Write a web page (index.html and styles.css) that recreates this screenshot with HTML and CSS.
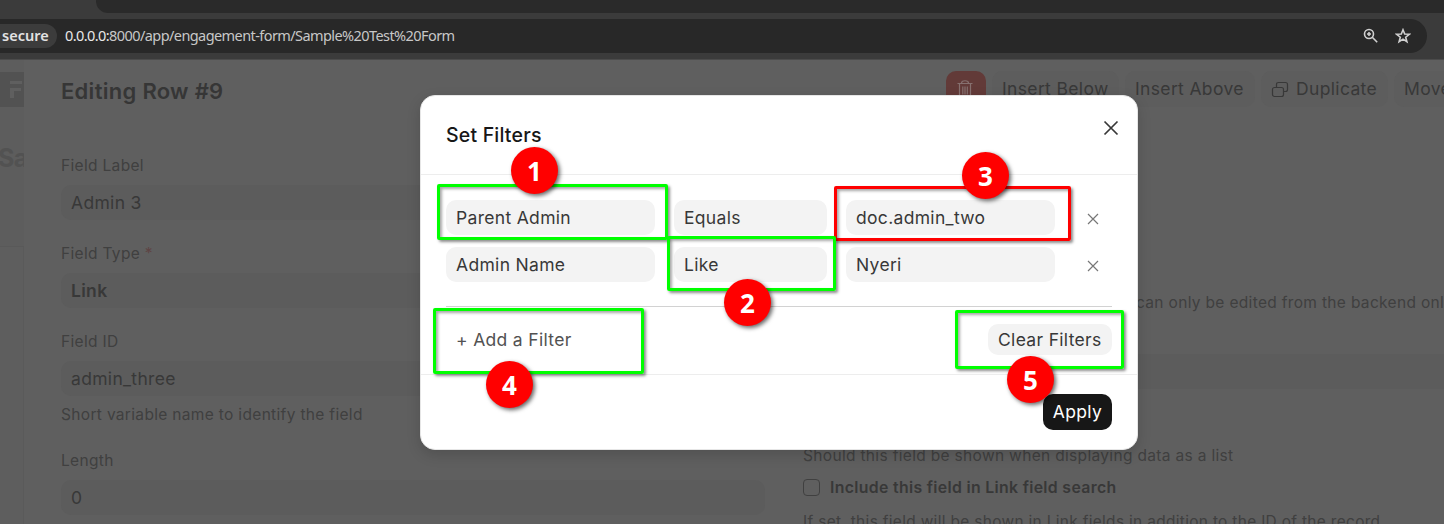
FILE: index.html
```
<!DOCTYPE html>
<html lang="en">
<head>
<meta charset="utf-8">
<title>Set Filters</title>
<link rel="stylesheet" href="styles.css">
</head>
<body>
<header class="browser">
  <div class="tabs"></div>
  <div class="omnibox">
    <span class="chip">secure</span>
    <span class="url"><b>0.0.0.0:</b>8000/app/engagement-form/Sample%20Test%20Form</span>
    <svg class="zoomicon" viewBox="0 0 16 16" width="16" height="16"><circle cx="6" cy="6" r="4.5"/><path d="M9.3 9.3 14.2 14.2M6 4v4M4 6h4"/></svg>
    <svg class="star" viewBox="0 0 16 16" width="16" height="16"><path d="M8 1.8 9.7 6l4.6.3-3.6 2.9 1.2 4.5L8 11.2l-3.9 2.5 1.2-4.5L1.7 6.3 6.3 6z"/></svg>
  </div>
</header>
<main class="page">
  <aside class="strip">
    <svg class="logo" viewBox="0 0 24 35" width="24" height="35"><rect x="-8" width="40" height="35" rx="4" fill="#525252"/><path d="M10 9h12v3H10zM10 16h11v3h-7v7h-4z" fill="#5f5f5f"/></svg>
    <div class="doc">Sa</div>
    <div class="sheet"></div>
  </aside>
  <section class="editor">
    <div class="head">
      <h1>Editing Row #9</h1>
      <div class="tools">
        <span class="btn trash"><svg viewBox="0 0 18 20" width="18" height="20"><path d="M1.5 4.5h15M3.5 4.5V18h11V4.5M5.5 4c0-3 7-3 7 0M6.8 7.5v8M9 7.5v8M11.3 7.5v8"/></svg></span>
        <span class="btn below">Insert Below</span>
        <span class="btn above">Insert Above</span>
        <span class="btn dup"><svg viewBox="0 0 18 18" width="18" height="18"><rect x="1.5" y="6.5" width="11" height="9" rx="2"/><path d="M5.5 6V3.5q0-2 2-2h7q2 0 2 2v5q0 2-2 2h-1.5"/></svg>Duplicate</span>
        <span class="btn move">Move</span>
      </div>
    </div>
    <div class="cols">
      <div class="col">
        <div class="label">Field Label</div><div class="input">Admin 3</div>
        <div class="label">Field Type <i>*</i></div><div class="input strong">Link</div>
        <div class="label">Field ID</div><div class="input id">admin_three</div>
        <div class="help">Short variable name to identify the field</div>
        <div class="label">Length</div><div class="input">0</div>
      </div>
      <div class="col right">
        <div class="note">can only be edited from the backend onl</div>
        <div class="wide"></div>
        <div class="desc">Should this field be shown when displaying data as a list</div>
        <div class="check"><span class="box"></span><b>Include this field in Link field search</b></div>
        <div class="desc last">If set, this field will be shown in Link fields in addition to the ID of the record</div>
      </div>
    </div>
  </section>
</main>

<div class="modal">
  <div class="mhead"><h2>Set Filters</h2><svg viewBox="0 0 16 16" width="16" height="16"><path d="M1.5 1.5 14.5 14.5M14.5 1.5 1.5 14.5"/></svg></div>
  <div class="mbody">
    <div class="filter"><span>Parent Admin</span><span>Equals</span><span>doc.admin_two</span><svg viewBox="0 0 12 12" width="12" height="12"><path d="M1 1 11 11M11 1 1 11"/></svg></div>
    <div class="filter"><span>Admin Name</span><span>Like</span><span>Nyeri</span><svg viewBox="0 0 12 12" width="12" height="12"><path d="M1 1 11 11M11 1 1 11"/></svg></div>
    <div class="actions"><span class="add">+ Add a Filter</span><span class="clear">Clear Filters</span></div>
  </div>
  <div class="mfoot"><span class="apply">Apply</span></div>
</div>

<div class="mark m1"></div><div class="mark m3"></div><div class="mark m2"></div><div class="mark m4"></div><div class="mark m5"></div>
<div class="dot d1">1</div><div class="dot d2">2</div><div class="dot d3">3</div><div class="dot d4">4</div><div class="dot d5">5</div>
</body>
</html>
```
FILE: styles.css
```
* { box-sizing: border-box; }
body { margin: 0; width: 1444px; height: 524px; overflow: hidden; position: relative; background: #5f5f5f; font-family: Inter, sans-serif; letter-spacing: .02em; white-space: nowrap; }
svg { fill: none; flex: none; }

.browser { height: 60px; background: #3b3b3b; border-bottom: 1px solid #4b4b4b; }
.tabs { height: 13px; margin-left: 96px; background: #2a2a2a; border-bottom-left-radius: 12px; }
.omnibox { margin-top: 6px; width: 1427px; height: 34px; background: #282828; border-radius: 0 17px 17px 0; display: flex; align-items: center; font-family: "Noto Sans", sans-serif; letter-spacing: 0; }
.chip { width: 57px; height: 24px; line-height: 23px; padding-left: 2px; background: #3c3c3c; border-radius: 0 12px 12px 0; color: #e3e3e3; font-size: 14.5px; font-weight: 600; }
.url { margin-left: 8px; flex: 1; line-height: 20px; padding-bottom: 2px; font-size: 14.5px; letter-spacing: -.58px; color: #c7c7c7; }
.url b { font-weight: 400; color: #e8e8e8; }
.omnibox svg { stroke: #d0d0d0; stroke-width: 1.6; }
.star { margin: 0 16px; }

.page { display: flex; height: 464px; }
.strip { width: 24px; background: #5d5d5d; overflow: hidden; padding-top: 12px; }
.logo { display: block; }
.doc { margin: 35px 0 0 -2px; height: 32px; line-height: 32px; font-size: 25px; font-weight: 700; color: #525252; letter-spacing: -.02em; }
.sheet { margin-top: 72px; height: 300px; border-top: 1px solid #595959; border-right: 1px solid #5a5a5a; background: #5e5e5e; }
.editor { width: 1420px; padding-left: 37px; color: #383838; overflow: hidden; }
.head { display: flex; height: 95px; padding-top: 11px; justify-content: space-between; }
h1 { margin: 0; font-size: 22px; line-height: 40px; font-weight: 600; letter-spacing: .013em; color: #363636; }
.tools { display: flex; gap: 6px; width: 498px; }
.btn { flex: none; height: 36px; line-height: 36px; border-radius: 10px; background: #5d5d5d; padding-left: 10px; font-size: 17.5px; letter-spacing: .02em; }
.btn svg { stroke: #383838; stroke-width: 1.2; vertical-align: -4px; margin-right: 7px; }
.trash { width: 40px; background: #623a38; }
.trash svg { stroke: #86706f; margin: 0; }
.below { width: 127px; } .above { width: 130px; } .dup { width: 127px; } .move { width: 100px; }
.cols { display: flex; gap: 38px; }
.col { width: 704px; flex: none; }
.label, .help, .desc, .note { height: 20px; line-height: 22px; font-size: 15.52px; color: #404040; }
.desc.last { font-size: 15.45px; }
.label i { font-style: normal; color: #5e4444; }
.input { margin: 10px 0 23px; height: 35px; line-height: 35px; padding-left: 10px; border-radius: 10px; background: #5c5c5c; font-size: 17.5px; }
.input.id { margin-bottom: 8px; }
.help { margin-bottom: 26px; }
.strong { font-weight: 600; }
.right { padding-top: 137px; }
.note { margin-left: 333px; }
.wide { margin-top: 42px; height: 35px; background: #5c5c5c; border-radius: 10px; }
.wide + .desc { margin-top: 56px; }
.check { display: flex; align-items: center; gap: 10px; height: 20px; margin: 12px 0 14px; font-size: 15.85px; color: #383838; }
.check b { font-weight: 600; }
.box { width: 17px; height: 17px; border: 1px solid #404040; border-radius: 4px; }

.modal { position: absolute; left: 420px; top: 95px; width: 718px; height: 355px; background: #fff; border: 1px solid #e6e6e6; border-radius: 15px; box-shadow: 0 5px 14px rgba(0,0,0,.15); color: #383838; }
.mhead { height: 79px; border-bottom: 1px solid #ededed; display: flex; justify-content: space-between; padding: 24px 18px 0 25px; }
.mhead svg { stroke: #383838; stroke-width: 1.7; }
h2 { margin: 0; height: 30px; line-height: 30px; font-size: 19.5px; font-weight: 500; color: #171717; letter-spacing: .01em; }
.mbody { height: 200px; border-bottom: 1px solid #ededed; padding: 25px 25px 0; }
.filter { display: grid; grid-template-columns: 209px 153px 209px 12px; column-gap: 19px; height: 35px; margin-bottom: 12px; align-items: center; }
.filter span { height: 35px; line-height: 35px; border-radius: 10px; padding-left: 10px; background: #f3f3f3; font-size: 17.5px; }
.filter svg { margin-left: 13px; margin-top: 3px; stroke: #777; stroke-width: 1.2; }
.actions { margin-top: 24px; border-top: 1px solid #d2d2d2; padding-top: 17px; display: flex; justify-content: space-between; font-size: 17.5px; line-height: 31px; }
.add { padding-left: 10px; color: #525252; }
.clear { width: 124px; height: 31px; background: #f3f3f3; border-radius: 10px; padding-left: 10px; }
.mfoot { padding: 19px 25px 0; display: flex; justify-content: flex-end; }
.apply { width: 69px; height: 36px; line-height: 36px; text-align: center; background: #171717; color: #fff; border-radius: 10px; font-size: 17.5px; }

.mark { position: absolute; border: 3px solid #0f0; border-radius: 2px; box-shadow: 2px 2px 3px rgba(0,0,0,.45), inset 2px 2px 3px rgba(0,0,0,.35); }
.m1 { left: 437px; top: 184px; width: 231px; height: 56px; }
.m2 { left: 667px; top: 236px; width: 169px; height: 55px; }
.m3 { left: 834px; top: 186px; width: 237px; height: 55px; border-color: #f00; }
.m4 { left: 433px; top: 308px; width: 211px; height: 66px; }
.m5 { left: 955px; top: 310px; width: 169px; height: 59px; }
.dot { position: absolute; width: 47px; height: 47px; border-radius: 50%; background: #f00; color: #fff; text-align: center; font: 700 26px/49px "Noto Sans", sans-serif; letter-spacing: 0; box-shadow: 2px 2px 4px rgba(0,0,0,.6); }
.d1 { left: 511px; top: 147px; }
.d2 { left: 724px; top: 279px; }
.d3 { left: 962px; top: 152px; }
.d4 { left: 486px; top: 361px; }
.d5 { left: 1007px; top: 356px; }
```
